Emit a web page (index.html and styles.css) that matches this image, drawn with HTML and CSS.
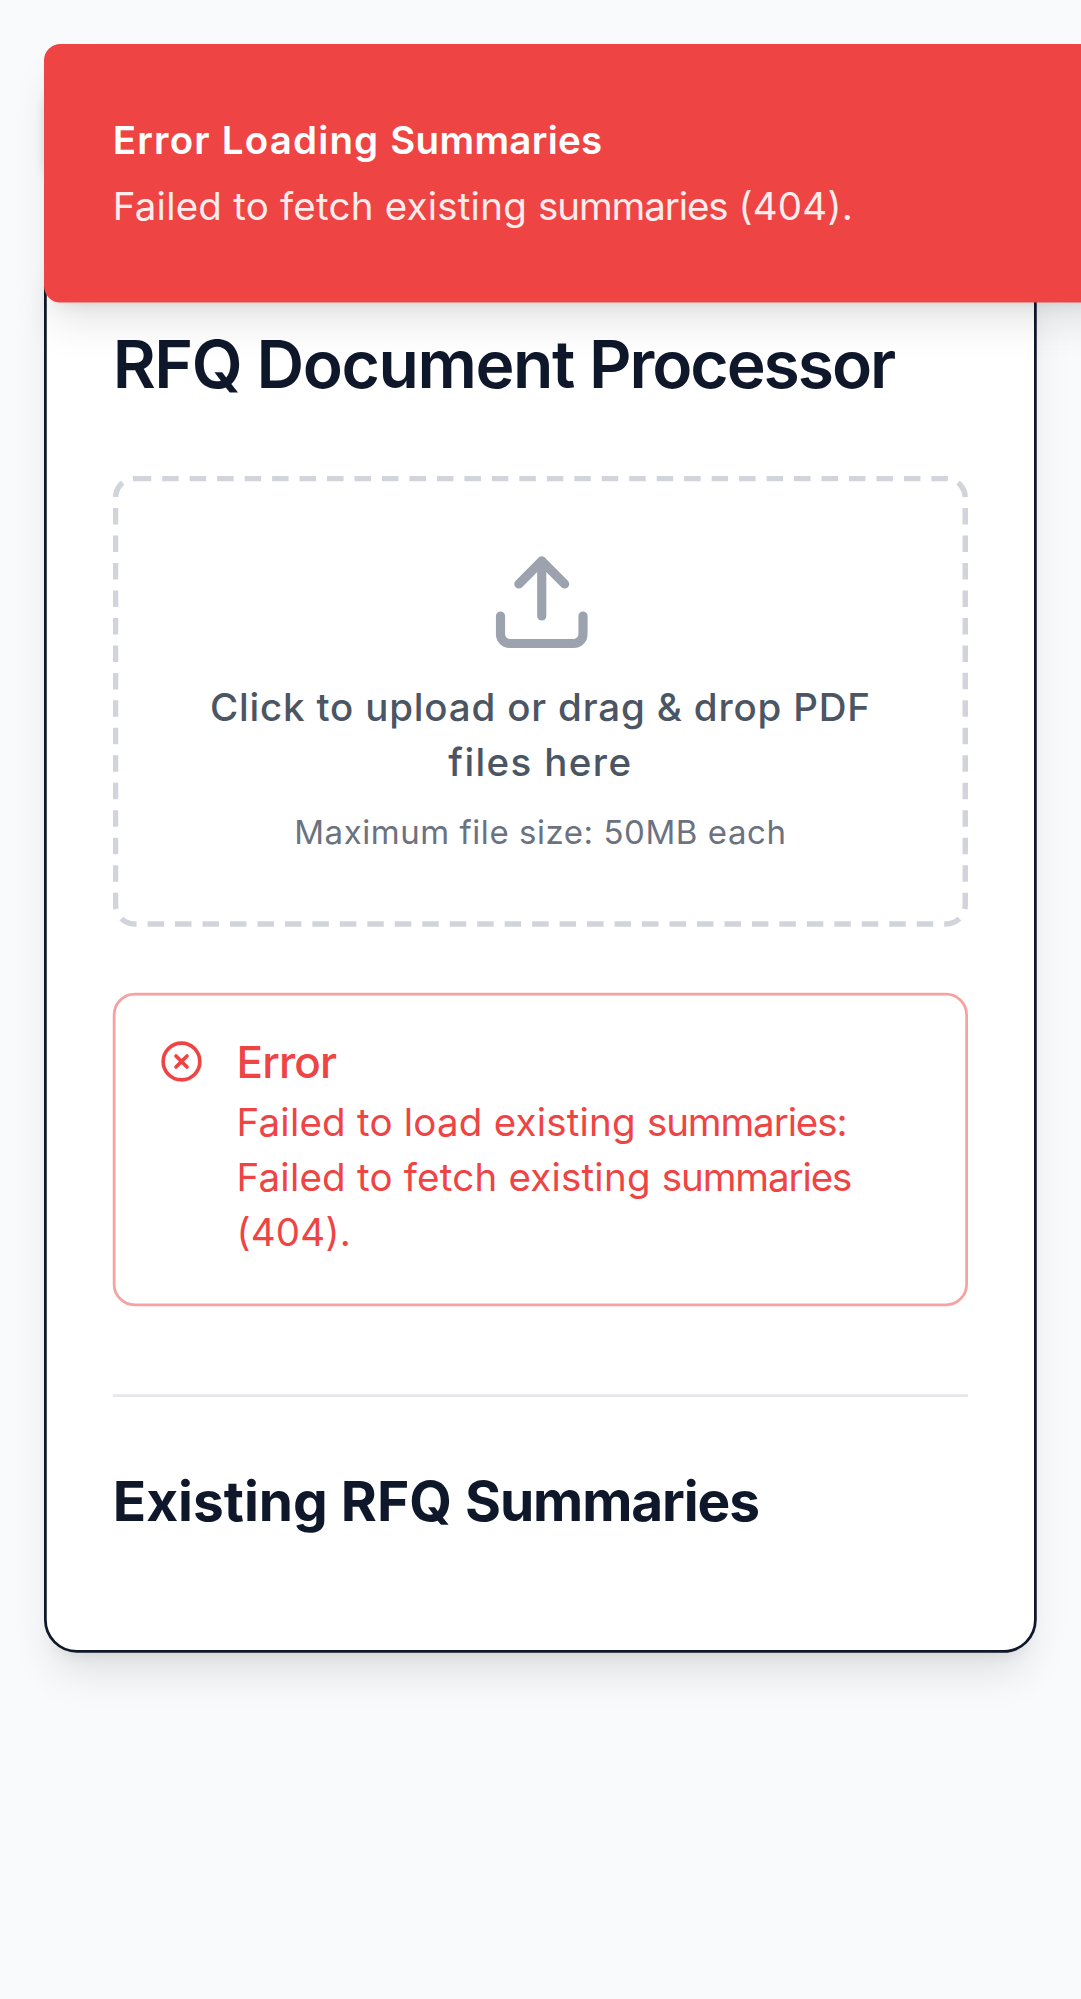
FILE: index.html
```html
<!DOCTYPE html>
<html lang="en">
<head>
<meta charset="utf-8">
<title>RFQ Document Processor</title>
<link rel="stylesheet" href="styles.css">
</head>
<body>
<div class="screen">
  <main class="page">
    <div class="topbar"></div>
    <section class="card">
      <h1 class="card-title"><span class="word-open">RFQ Document</span> <span class="word-close">Processor</span></h1>
      <div class="dropzone">
        <svg class="upload-icon" viewBox="0 0 24 24" fill="none" stroke="currentColor" stroke-width="2" stroke-linecap="round" stroke-linejoin="round">
          <path d="M21 15v4a2 2 0 0 1-2 2H5a2 2 0 0 1-2-2v-4"/>
          <polyline points="17 8 12 3 7 8"/>
          <line x1="12" x2="12" y1="3" y2="15"/>
        </svg>
        <p class="dropzone-label">Click to upload or drag &amp; drop PDF <span class="wide">files here</span></p>
        <p class="dropzone-hint">Maximum file size: 50MB each</p>
      </div>
      <div class="alert" role="alert">
        <svg class="alert-icon" viewBox="0 0 24 24" fill="none" stroke="currentColor" stroke-width="2" stroke-linecap="round" stroke-linejoin="round">
          <circle cx="12" cy="12" r="10"/>
          <path d="m15 9-6 6"/>
          <path d="m9 9 6 6"/>
        </svg>
        <div class="alert-body">
          <h5 class="alert-title">Error</h5>
          <p class="alert-text">Failed to load existing <span class="tight">summaries:</span> Failed to fetch existing <span class="tight">summaries</span> (404).</p>
        </div>
      </div>
      <div class="divider"></div>
      <h2 class="summaries-title">Existing RFQ <span class="tight">Summaries</span></h2>
    </section>
  </main>
  <div class="toast" role="status">
    <div class="toast-title">Error Loading <span class="toast-word">Summaries</span></div>
    <div class="toast-text">Failed to fetch existing <span class="tight">summaries</span> (404).</div>
  </div>
</div>
</body>
</html>
```
FILE: styles.css
```css
* {
  box-sizing: border-box;
  margin: 0;
  padding: 0;
}

html,
body {
  height: 100%;
  overflow: hidden;
  background: #f9fafb;
}

/* Phone-sized layout, enlarged to the display density */
.screen {
  position: relative;
  width: 393px;
  height: 727px;
  transform: scale(2.75);
  transform-origin: 0 0;
  font-family: Inter, "Liberation Sans", sans-serif;
  font-size: 14px;
  line-height: 20px;
  color: #0f172a;
}

.page {
  display: flex;
  flex-direction: column;
  gap: 26px;
  padding: 32px 16px 0;
}

.topbar {
  height: 34px;
  background: #fff;
  border-radius: 8px;
  box-shadow: 0 0 4px rgba(0, 0, 0, 0.1);
}

.card {
  padding: 24px;
  background: #fff;
  border: 1px solid #0f172a;
  border-radius: 12px;
  box-shadow: 0 10px 15px -3px rgba(0, 0, 0, 0.1), 0 4px 6px -4px rgba(0, 0, 0, 0.1);
}

.card-title {
  margin-bottom: 24px;
  font-size: 24px;
  font-weight: 600;
  line-height: 32px;
  letter-spacing: -0.6px;
}

.word-open {
  letter-spacing: -0.52px;
}

.word-close {
  letter-spacing: -0.75px;
}

.wide {
  letter-spacing: 0.5px;
}

.tight {
  letter-spacing: -0.4px;
}

.dropzone {
  display: flex;
  flex-direction: column;
  align-items: center;
  gap: 8px;
  padding: 24px;
  border: 2px dashed #d1d5db;
  border-radius: 8px;
  text-align: center;
}

.upload-icon {
  width: 40px;
  height: 40px;
  color: #9ca3af;
}

.dropzone-label {
  font-weight: 500;
  letter-spacing: 0.3px;
  color: #4b5563;
}

.dropzone-hint {
  font-size: 12px;
  line-height: 16px;
  letter-spacing: 0.2px;
  color: #6b7280;
}

.alert {
  display: flex;
  gap: 12px;
  margin-top: 24px;
  padding: 16px;
  border: 1px solid rgba(239, 68, 68, 0.5);
  border-radius: 8px;
  color: #ef4444;
}

.alert-icon {
  flex: none;
  width: 16px;
  height: 16px;
}

.alert-title {
  margin-bottom: 4px;
  font-size: 16px;
  font-weight: 500;
  line-height: 16px;
  letter-spacing: -0.3px;
}

.alert-text {
  letter-spacing: 0.08px;
}

.divider {
  height: 1px;
  margin: 32px 0 24px;
  background: #e5e7eb;
}

.summaries-title {
  margin-bottom: 16px;
  font-size: 20px;
  font-weight: 700;
  line-height: 28px;
}

.toast {
  position: absolute;
  top: 16px;
  left: 16px;
  display: flex;
  flex-direction: column;
  gap: 4px;
  width: 393px;
  padding: 24px;
  background: #ef4444;
  border: 1px solid #ef4444;
  border-radius: 6px;
  box-shadow: 0 10px 15px -3px rgba(0, 0, 0, 0.1), 0 4px 6px -4px rgba(0, 0, 0, 0.1);
  color: #fff;
}

.toast-title {
  font-weight: 600;
  letter-spacing: 0.43px;
}

.toast-word {
  letter-spacing: 0.1px;
}

.toast-text {
  letter-spacing: 0.08px;
  opacity: 0.9;
}
```
